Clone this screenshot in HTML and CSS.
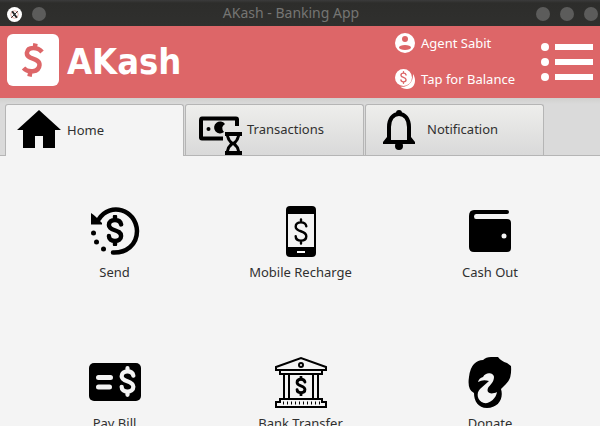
FILE: index.html
```html
<!DOCTYPE html>
<html lang="en">
<head>
<meta charset="utf-8">
<title>AKash - Banking App</title>
<link rel="stylesheet" href="styles.css">
</head>
<body>
<svg class="defs" aria-hidden="true">
  <symbol id="dollar" viewBox="0 0 16 28"><path d="M13.5 8.500C13 5.800 11 4.500 8 4.500C4.800 4.500 2.500 6.200 2.500 9C2.500 15 13.500 12.500 13.500 19C13.500 22 11 23.500 8 23.500C4.800 23.500 2.500 22 2.500 19M8 1.500V4.500M8 23.500V26.500" fill="none" stroke="currentColor" stroke-linecap="round"/></symbol>
</svg>
<div class="titlebar">
  <div class="window-side">
    <svg class="app-mark" viewBox="0 0 16 16" aria-hidden="true"><circle cx="8" cy="8" r="8" fill="#fff"/><circle cx="8" cy="8" r="4" fill="none" stroke="#e8a79f" stroke-width="1"/><path d="M5.500 4.500L10.500 11.500" stroke="#222" stroke-width="2"/><path d="M11.500 4.500L4.500 11.500" stroke="#222" stroke-width="1"/></svg>
    <button class="dot" aria-label="Pin window"></button>
  </div>
  <span class="window-title">AKash - Banking App</span>
  <div class="window-side window-controls">
    <button class="dot" aria-label="Minimize"></button>
    <button class="dot" aria-label="Maximize"></button>
    <button class="dot" aria-label="Close"></button>
  </div>
</div>
<header class="header">
  <svg class="logo" viewBox="0 0 52 52" aria-hidden="true"><rect width="52" height="52" rx="6" fill="#fff"/><path d="M35 18C31 13 21 12 20 18.500C18.500 26 33 23 32.500 31C32 38.500 21 39 16.500 34M28.500 9.500L27.500 15M22.500 42.500L23.500 37" fill="none" stroke="#dd6668" stroke-width="4.500"/></svg>
  <h1 class="brand">AKash</h1>
  <div class="account">
    <button class="account-action">
      <svg viewBox="0 0 20 20" aria-hidden="true"><circle cx="10" cy="10" r="10" fill="#fff"/><circle cx="10" cy="6" r="3" fill="#dd6668"/><ellipse cx="10" cy="14.500" rx="6" ry="2.500" fill="#dd6668"/></svg>
      <span>Agent Sabit</span>
    </button>
    <button class="account-action">
      <svg viewBox="0 0 20 20" aria-hidden="true"><path d="M18 5C22 11 20 20 12 20C9 20 6.500 19 5.500 17.800C13 18.500 18.500 13 18 5Z" fill="#fff"/><circle cx="8.500" cy="8.500" r="8.500" fill="#fff"/><svg x="4.500" y="2" width="8" height="13" color="#dd6668" stroke-width="3"><use href="#dollar"/></svg></svg>
      <span>Tap for Balance</span>
    </button>
  </div>
  <button class="menu" aria-label="Menu">
    <svg viewBox="0 0 52 38" aria-hidden="true" fill="#fff"><circle cx="4" cy="4" r="4"/><circle cx="4" cy="19" r="4"/><circle cx="4" cy="34" r="4"/><path d="M14 1H52V7H14ZM14 16H52V22H14ZM14 31H52V37H14Z"/></svg>
  </button>
</header>
<nav class="tabs" role="tablist">
  <button class="tab tab-active" role="tab" aria-selected="true">
    <svg viewBox="0 0 48 48" aria-hidden="true"><path d="M24 4L46 24H40V42H28V30H20V42H8V24H2Z"/></svg>
    <span>Home</span>
  </button>
  <button class="tab" role="tab" aria-selected="false">
    <svg viewBox="0 0 48 48" aria-hidden="true"><g transform="translate(1 1)"><path d="M25 32.500H6Q5 32.500 5 31.500V14.500Q5 12.500 6 12.500H40Q41 12.500 41 13.500V18" fill="none" stroke="#000" stroke-width="4" stroke-linecap="square"/><circle cx="12.500" cy="23" r="2"/><path d="M28 26A6 6 0 1 1 29 18Q24 21 28 26Z"/><path d="M29 26H46V30H44Q43 35 40 37.500Q43 40 44 45H46V49H29V45H30Q31 40 34 37.500Q31 35 30 30H29Z"/><path d="M33 30H41Q40 34 37 36Q34 34 33 30ZM33 45Q34 41 37 39Q40 41 41 45Z" fill="#e4e4e4"/></g></svg>
    <span>Transactions</span>
  </button>
  <button class="tab" role="tab" aria-selected="false">
    <svg viewBox="0 0 48 48" aria-hidden="true"><path d="M14 36V22C14 14 18 9 24 9S34 14 34 22V36" fill="none" stroke="#000" stroke-width="4"/><circle cx="24" cy="8" r="3"/><circle cx="24" cy="41" r="4"/><path d="M12 32L15 35H33L36 32L40 37V39H8V37Z"/></svg>
    <span>Notification</span>
  </button>
</nav>
<main class="services">
  <button class="service">
    <svg viewBox="0 0 64 64" aria-hidden="true"><path d="M16 20C27 3 53 10 54 32C54 46 43 54 30 53.500" fill="none" stroke="#000" stroke-width="4.500" stroke-linecap="round"/><path d="M8 14Q11 16 13 18L19 24V25.500H8Z"/><circle cx="10.500" cy="34" r="2.500"/><circle cx="13.500" cy="43" r="2.500"/><circle cx="20.500" cy="50" r="2.500"/><svg x="23" y="16" width="18" height="31" stroke-width="4"><use href="#dollar"/></svg></svg>
    <span>Send</span>
  </button>
  <button class="service">
    <svg viewBox="0 0 64 64" aria-hidden="true"><rect x="17" y="7" width="30" height="51" rx="4"/><path d="M19 15H45V48H19Z" fill="#f4f4f4"/><path d="M28 52H36V54H28Z" fill="#fff"/><svg x="24" y="19" width="16" height="27" stroke-width="2.500"><use href="#dollar"/></svg></svg>
    <span>Mobile Recharge</span>
  </button>
  <button class="service">
    <svg viewBox="0 0 64 64" aria-hidden="true"><path d="M16 11H49Q51 11 51 13T49 15H18Q16 15 16 17.500T18 20H49Q53 20 53 24V49Q53 53 49 53H16Q11 53 11 48V17Q11 11 16 11Z"/><circle cx="46" cy="37" r="2.500" fill="#f4f4f4"/></svg>
    <span>Cash Out</span>
  </button>
  <button class="service">
    <svg viewBox="0 0 64 64" aria-hidden="true"><rect x="6" y="13" width="52" height="38" rx="5"/><path d="M15.500 27.500H27.500M15.500 37H26.500" stroke="#f4f4f4" stroke-width="5" stroke-linecap="round"/><svg x="36" y="16" width="17" height="31" color="#f4f4f4" stroke-width="4"><use href="#dollar"/></svg></svg>
    <span>Pay Bill</span>
  </button>
  <button class="service">
    <svg viewBox="0 0 64 64" aria-hidden="true"><g fill="none" stroke="#000" stroke-width="2"><path d="M7 17L32 8L57 17V20H7ZM11 20V24H53V20M15 24V49M20 24V49M44 24V49M49 24V49M7 52V57H57V52H53V49H11V52Z"/><circle cx="32" cy="15" r="2"/><path d="M14 53H51" stroke-width="3" stroke-dasharray="1 3"/></g><svg x="25" y="26" width="14" height="20" stroke-width="4"><use href="#dollar"/></svg></svg>
    <span>Bank Transfer</span>
  </button>
  <button class="service">
    <svg viewBox="0 0 64 64" aria-hidden="true"><path d="M16 14Q20 10 25 10Q28 7 33 7H40Q43 11 49 13L53 16Q54 29 48 34Q45 37 43 39C46 49 40 58 29 58C20 58 16 51 16 43Q9 40 11 27Q12 18 16 14Z"/><path d="M20 32Q21 28 25 27C28 21 36 23 36 27C36 32 32 35 30 38C28 43 33 45 39 42C38 49 31 54 26 53C19 51 18 43 22 39L31 31Q25 29 20 32Z" fill="#f4f4f4"/></svg>
    <span>Donate</span>
  </button>
</main>
</body>
</html>
```
FILE: styles.css
```css
* { box-sizing: border-box; }

body {
  margin: 0;
  height: 100vh;
  overflow: hidden;
  background: #f4f4f4;
  color: #303030;
  font: 13px/18px "Noto Sans", sans-serif;
}

button {
  margin: 0;
  padding: 0;
  border: 0;
  background: none;
  color: inherit;
  font: inherit;
}

svg { display: block; flex: none; }

.defs { position: absolute; width: 0; height: 0; }

.titlebar {
  display: flex;
  align-items: center;
  height: 26px;
  padding-bottom: 1px;
  background: linear-gradient(#3b3b3b, #2d2d2b 3px, #30302e);
}

.window-side {
  display: flex;
  flex: 1;
  align-items: center;
  gap: 10px;
  padding: 3px 2px 0 7px;
}

.window-controls { justify-content: flex-end; }

.app-mark { width: 15px; height: 15px; }

.dot {
  width: 14px;
  height: 14px;
  border-radius: 50%;
  background: #5c5c5b;
}

.window-title { margin-right: 18px; color: #757573; font-size: 14px; }

.header {
  display: flex;
  align-items: center;
  height: 72px;
  padding: 0 7px;
  background: #dd6668;
  color: #fff;
}

.logo { width: 52px; height: 52px; margin-bottom: 4px; }

.brand {
  margin: 0 auto 0 8px;
  font: bold 36px/40px "DejaVu Sans Condensed", "DejaVu Sans", sans-serif;
  font-stretch: condensed;
}

.account { display: grid; gap: 16px; margin: 0 26px 2px 0; }

.account-action { display: flex; align-items: center; gap: 6px; }

.account-action > svg { width: 20px; height: 20px; }

.menu > svg { width: 52px; height: 38px; }

.tabs {
  display: flex;
  gap: 1px;
  padding: 6px 5px 0;
  border-bottom: 1px solid #b5b5b5;
  background: linear-gradient(#d0d0ce, #dadada 6px);
}

.tab {
  display: flex;
  align-items: center;
  gap: 4px;
  flex: 0 1 179px;
  min-width: 0;
  height: 51px;
  padding: 0 0 2px 9px;
  border: 1px solid #b5b5b5;
  border-bottom: 0;
  border-radius: 3px 3px 0 0;
  background: linear-gradient(#eeeeec, #d9d9d9);
}

.tab > svg { width: 48px; height: 48px; overflow: visible; color: #000; }

.tab-active { height: 52px; margin-bottom: -1px; background: #f4f4f4; }

.services {
  display: grid;
  grid-template-columns: 185fr 187fr 192fr;
  row-gap: 69px;
  padding: 43px 14px 0 22px;
}

.service {
  display: flex;
  flex-direction: column;
  align-items: center;
}

.service > svg { width: 64px; height: 64px; color: #000; }
```
